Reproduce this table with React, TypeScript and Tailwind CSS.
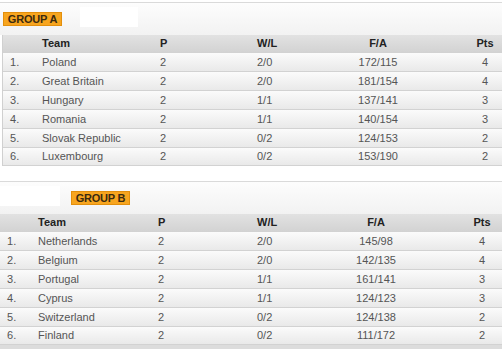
type Row = [string, string, string, string, string];

const groupA: Row[] = [
  ["Poland", "2", "2/0", "172/115", "4"],
  ["Great Britain", "2", "2/0", "181/154", "4"],
  ["Hungary", "2", "1/1", "137/141", "3"],
  ["Romania", "2", "1/1", "140/154", "3"],
  ["Slovak Republic", "2", "0/2", "124/153", "2"],
  ["Luxembourg", "2", "0/2", "153/190", "2"],
];

const groupB: Row[] = [
  ["Netherlands", "2", "2/0", "145/98", "4"],
  ["Belgium", "2", "2/0", "142/135", "4"],
  ["Portugal", "2", "1/1", "161/141", "3"],
  ["Cyprus", "2", "1/1", "124/123", "3"],
  ["Switzerland", "2", "0/2", "124/138", "2"],
  ["Finland", "2", "0/2", "111/172", "2"],
];

function Badge({ label }: { label: string }) {
  return (
    <div className="h-[14px] w-[59px] flex items-center justify-center bg-[#f7a51f] border border-[#e38f0c] text-[#3a2a10] font-bold text-[11px] leading-none tracking-[-0.2px]">
      {label}
    </div>
  );
}

function TableA({ rows }: { rows: Row[] }) {
  const cols = "grid grid-cols-[39px_118px_97px_81px_80px_1fr] items-center";
  return (
    <div className="ml-[2px] border-l border-[#d0d0d0]">
      <div className={`${cols} h-[17px] bg-linear-to-b from-[#e2e2e2] to-[#d3d3d3] font-bold text-[#222]`}>
        <span />
        <span>Team</span>
        <span>P</span>
        <span>W/L</span>
        <span className="text-center">F/A</span>
        <div className="flex justify-end">
          <span className="w-[34px] text-center">Pts</span>
        </div>
      </div>
      {rows.map((r, i) => (
        <div
          key={r[0]}
          className={`${cols} h-[19px] border-t border-[#d2d2d2] bg-linear-to-b from-[#fbfbfb] to-[#e9e9e9] text-[#555] ${i === rows.length - 1 ? "border-b" : ""}`}
        >
          <span className="pl-[7px]">{i + 1}.</span>
          <span>{r[0]}</span>
          <span>{r[1]}</span>
          <span>{r[2]}</span>
          <span className="text-center">{r[3]}</span>
          <div className="flex justify-end">
            <span className="w-[34px] text-center">{r[4]}</span>
          </div>
        </div>
      ))}
    </div>
  );
}

function TableB({ rows }: { rows: Row[] }) {
  const cols = "grid grid-cols-[38px_120px_99px_79px_80px_1fr] items-center";
  return (
    <div>
      <div className={`${cols} h-[17px] bg-linear-to-b from-[#e2e2e2] to-[#d3d3d3] font-bold text-[#222]`}>
        <span />
        <span>Team</span>
        <span>P</span>
        <span>W/L</span>
        <span className="text-center">F/A</span>
        <div className="flex justify-end pr-[3px]">
          <span className="w-[34px] text-center">Pts</span>
        </div>
      </div>
      {rows.map((r, i) => (
        <div
          key={r[0]}
          className={`${cols} h-[19px] border-t border-[#d2d2d2] bg-linear-to-b from-[#fbfbfb] to-[#e9e9e9] text-[#555] ${i === rows.length - 1 ? "border-b" : ""}`}
        >
          <span className="pl-[7px]">{i + 1}.</span>
          <span>{r[0]}</span>
          <span>{r[1]}</span>
          <span>{r[2]}</span>
          <span className="text-center">{r[3]}</span>
          <div className="flex justify-end pr-[3px]">
            <span className="w-[34px] text-center">{r[4]}</span>
          </div>
        </div>
      ))}
      <div className="h-[4px] bg-[#dcdcdc]" />
    </div>
  );
}

export default function App() {
  return (
    <div className="w-[502px] h-[350px] overflow-hidden bg-white font-['Liberation_Sans',Arial,sans-serif] text-[11px] leading-none">
      {/* Group A */}
      <section className="pt-[2px]">
        <div className="h-[33px] border-t border-[#dadada] bg-linear-to-b from-[#fdfdfd] to-[#f2f2f2] flex items-start">
          <div className="mt-[9px] ml-[3px]">
            <Badge label="GROUP A" />
          </div>
          <div className="mt-[4px] ml-[18px] w-[58px] h-[20px] bg-white" />
        </div>
        <TableA rows={groupA} />
      </section>

      {/* Group B */}
      <section className="mt-[15px]">
        <div className="h-[33px] border-t border-[#dadada] bg-linear-to-b from-[#fdfdfd] to-[#f2f2f2] flex items-start">
          <div className="mt-[4px] w-[60px] h-[20px] bg-white" />
          <div className="mt-[9px] ml-[11px]">
            <Badge label="GROUP B" />
          </div>
        </div>
        <TableB rows={groupB} />
      </section>
    </div>
  );
}
